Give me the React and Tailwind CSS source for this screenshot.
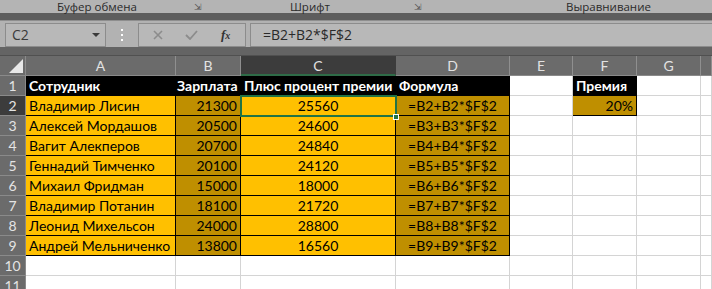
import React from 'react'

// column widths in px: row header, A..G, and the clipped H
const cols = [
  { key: '', w: 'w-[26px]' },
  { key: 'A', w: 'w-[150px]' },
  { key: 'B', w: 'w-[65px]' },
  { key: 'C', w: 'w-[155px]' },
  { key: 'D', w: 'w-[114px]' },
  { key: 'E', w: 'w-[63px]' },
  { key: 'F', w: 'w-[64px]' },
  { key: 'G', w: 'w-[64px]' },
  { key: '', w: 'flex-1' },
]

const people = [
  ['Владимир Лисин', 21300, 25560],
  ['Алексей Мордашов', 20500, 24600],
  ['Вагит Алекперов', 20700, 24840],
  ['Геннадий Тимченко', 20100, 24120],
  ['Михаил Фридман', 15000, 18000],
  ['Владимир Потанин', 18100, 21720],
  ['Леонид Михельсон', 24000, 28800],
  ['Андрей Мельниченко', 13800, 16560],
]

const font = { fontFamily: 'Lato, "Liberation Sans", sans-serif' }

function Cell({ w, className = '', children }) {
  return (
    <div className={`${w} h-5 shrink-0 border-r border-b px-[3px] leading-[19px] text-[14px] whitespace-nowrap overflow-visible ${className}`}>
      {children}
    </div>
  )
}

function RowHeader({ n, active }) {
  return (
    <div
      className={`w-[26px] h-5 shrink-0 border-r border-b border-[#8a8a8a] text-center leading-[19px] text-[14px] text-[#e4e4e4] ${active ? 'bg-[#3c3c3c]' : 'bg-[#6b6b6b]'}`}
    >
      {n}
    </div>
  )
}

function SheetRow({ n, cells, active }) {
  return (
    <div className="flex">
      <RowHeader n={n} active={active} />
      {cells.map((c, i) => (
        <Cell key={i} w={cols[i + 1].w} className={c.cls}>
          {c.text}
        </Cell>
      ))}
    </div>
  )
}

const grid = 'bg-white border-[#d4d4d4]'
const gold = 'bg-[#ffc000] border-black text-black'
const dark = 'bg-[#bf8f00] border-black text-black'
const head = 'bg-black border-black text-white font-bold text-[13.5px]'

export default function App() {
  const rows = []
  // row 1 – table headers
  rows.push(
    <SheetRow
      key={1}
      n={1}
      cells={[
        { text: 'Сотрудник', cls: head },
        { text: 'Зарплата', cls: head + ' pl-[1px]' },
        { text: 'Плюс процент премии', cls: head },
        { text: 'Формула', cls: head },
        { text: '', cls: grid },
        { text: 'Премия', cls: head },
        { text: '', cls: grid },
        { text: '', cls: grid },
      ]}
    />
  )
  people.forEach(([name, pay, total], i) => {
    const r = i + 2
    rows.push(
      <SheetRow
        key={r}
        n={r}
        active={r === 2}
        cells={[
          { text: name, cls: gold },
          { text: pay, cls: dark + ' text-right' },
          { text: total, cls: gold + ' text-center' },
          { text: `=B${r}+B${r}*$F$2`, cls: dark + ' text-center' },
          { text: '', cls: grid },
          r === 2 ? { text: '20%', cls: dark + ' text-right' } : { text: '', cls: grid },
          { text: '', cls: grid },
          { text: '', cls: grid },
        ]}
      />
    )
  })
  for (const r of [10, 11]) {
    rows.push(
      <SheetRow key={r} n={r} cells={cols.slice(1).map(() => ({ text: '', cls: grid }))} />
    )
  }

  return (
    <div className="w-[712px] h-[289px] overflow-hidden bg-white" style={font}>
      {/* ribbon group labels */}
      <div className="h-[13px] bg-[#b4b4b4] text-[11.5px] leading-[13px] text-[#2a2a2a]" style={{ fontFamily: '"Open Sans", "Liberation Sans", sans-serif' }}>
        <div className="flex items-start">
          <span className="ml-[57px] w-[137px]">Буфер обмена</span>
          <span className="w-[10px] text-[9px] text-[#555]">⇲</span>
          <span className="ml-[86px] w-[124px]">Шрифт</span>
          <span className="w-[10px] text-[9px] text-[#555]">⇲</span>
          <span className="ml-[142px]">Выравнивание</span>
        </div>
      </div>
      <div className="h-2 bg-[#5d5d5d] border-b border-[#8e8e8e]" />

      {/* formula bar */}
      <div className="h-[26px] bg-[#b2b2b2] flex items-center gap-0 pt-[1px]" style={{ fontFamily: '"Open Sans", "Liberation Sans", sans-serif' }}>
        <div className="ml-[5px] w-[101px] h-6 border border-[#8c8c8c] bg-[#b8b8b8] flex items-center justify-between pl-[6px] pr-[5px]">
          <span className="text-[14px] text-[#3a3a3a]">C2</span>
          <span className="w-0 h-0 border-l-[4px] border-r-[4px] border-t-[4px] border-l-transparent border-r-transparent border-t-[#3a3a3a]" />
        </div>
        <div className="w-[32px] flex flex-col items-center gap-[3px]">
          <span className="w-[2px] h-[2px] bg-white" />
          <span className="w-[2px] h-[2px] bg-white" />
          <span className="w-[2px] h-[2px] bg-white" />
        </div>
        <div className="w-[108px] h-6 border border-[#8c8c8c] bg-[#b8b8b8] flex items-center">
          <svg className="ml-[14px]" width="10" height="10" viewBox="0 0 10 10">
            <path d="M1 1 L9 9 M9 1 L1 9" stroke="#8c8c8c" strokeWidth="1.6" />
          </svg>
          <svg className="ml-[22px]" width="13" height="10" viewBox="0 0 13 10">
            <path d="M1 5 L5 9 L12 1" stroke="#8c8c8c" strokeWidth="1.8" fill="none" />
          </svg>
          <span className="ml-[23px] italic font-bold text-[13px] text-[#333]" style={{ fontFamily: '"Liberation Serif", serif' }}>
            f<span className="text-[10px]">x</span>
          </span>
        </div>
        <div className="ml-[4px] flex-1 h-6 border-l border-t border-b border-[#8c8c8c] bg-[#b8b8b8] flex items-center pl-[12px] text-[14px] text-[#2a2a2a]">
          =B2+B2*$F$2
        </div>
      </div>
      <div className="h-[9px] bg-[#646464] border-b border-[#505050]" />

      {/* column headers */}
      <div className="flex h-5 bg-[#6b6b6b] text-[14px] text-[#e2e2e2]">
        {cols.map((c, i) =>
          i === 0 ? (
            <div key={i} className="w-[26px] shrink-0 border-r border-b border-[#8a8a8a] flex items-end justify-end pr-[2px] pb-[2px]">
              <span className="w-0 h-0 border-l-[14px] border-t-[14px] border-l-transparent border-t-transparent border-b-0 border-r-0 relative">
                <span className="absolute -left-[14px] -top-[14px] w-0 h-0 border-l-[14px] border-b-[14px] border-l-transparent border-b-[#e8e8e8]" />
              </span>
            </div>
          ) : (
            <div
              key={i}
              className={`${c.w} shrink-0 border-r text-center leading-[20px] ${c.key === 'C' ? 'bg-[#3c3c3c] border-[#3c3c3c] border-b-2 border-b-[#2e6b47]' : 'border-[#8f8f8f] border-b border-b-[#8a8a8a]'}`}
            >
              {c.key}
            </div>
          )
        )}
      </div>

      {/* sheet */}
      <div className="relative">
        {rows}
        {/* active cell C2 */}
        <div className="absolute left-[240px] top-[19px] w-[157px] h-[22px] border-2 border-[#217346]" />
        <div className="absolute left-[393px] top-[38px] w-[6px] h-[6px] bg-[#217346] border border-white" />
      </div>
    </div>
  )
}
